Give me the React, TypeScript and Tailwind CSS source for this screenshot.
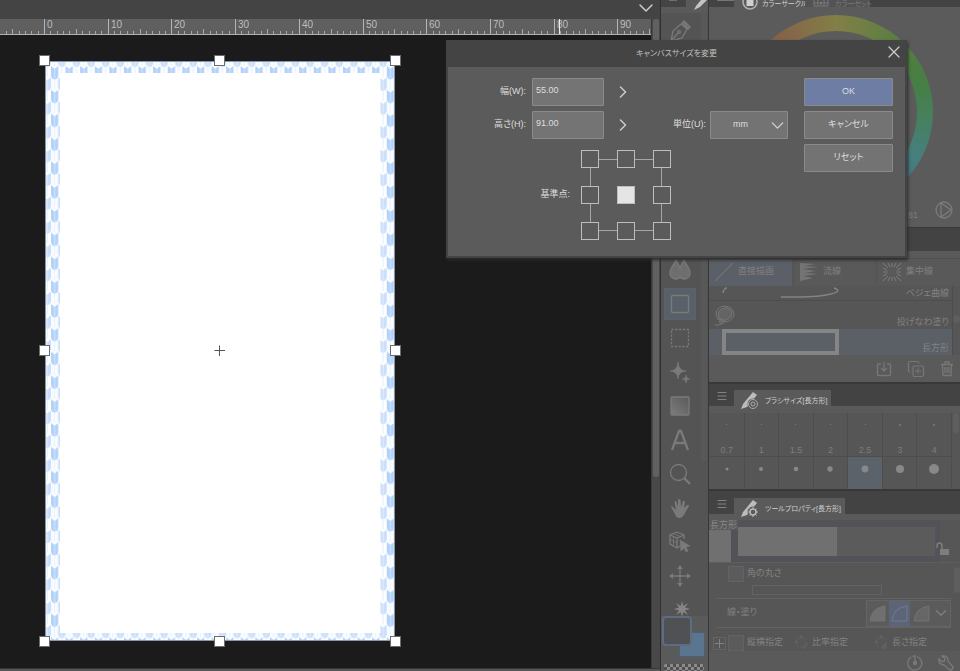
import type { ReactNode } from "react";
import { ChevronDown, ChevronRight, Copy, Menu, X } from "lucide-react";

const RULER_STEP = 6.37;
const RULER_ORIGIN = 45;

const Ruler = () => {
  const ticks = Array.from({ length: 103 }, (_, i) => i - 7);

  return (
    <svg className="block h-4 w-full bg-[#5f5f5f]" aria-hidden="true">
      {ticks.map((n) => {
        const x = Math.round(RULER_ORIGIN + n * RULER_STEP) - 0.5;
        const top = n % 10 === 0 ? 0 : n % 5 === 0 ? 10 : 12;
        return <line key={n} x1={x} x2={x} y1={top} y2={16} stroke={n % 10 === 0 ? "#b5b5b5" : "#a8a8a8"} />;
      })}
      {Array.from({ length: 10 }, (_, i) => (
        <text
          key={i}
          x={Math.round(RULER_ORIGIN + i * 10 * RULER_STEP) + 2}
          y={9}
          fill="#bdbdbd"
          className="text-[10px]"
        >
          {i * 10}
        </text>
      ))}
      <line x1={559.5} x2={559.5} y1={0} y2={16} stroke="#ececec" />
      <rect x={0} y={15} width="100%" height={1} fill="#b0b0b0" />
    </svg>
  );
};

const Feather = ({ x, y, fill }: { x: number; y: number; fill: string }) => (
  <g transform={`translate(${x} ${y})`}>
    <path d="M0 0 L3.2 2.6 V13.4 L1.2 12.6 L0 10Z M7.3 0 L4.1 2.6 V13.4 L6.1 12.6 L7.3 10Z" fill={fill} />
    <path d="M3.2 2.6 H4.1 V13.4 H3.2Z" fill={fill} opacity="0.8" />
  </g>
);

const Paper = () => (
  <svg className="block h-full w-full" viewBox="0 0 350 580" aria-hidden="true">
    <defs>
      <pattern id="yagasuri" x="5.95" y="5" width="14.6" height="23.8" patternUnits="userSpaceOnUse">
        <rect width="14.6" height="23.8" fill="#fdfeff" />
        <path d="M3.6 13 V23.8 M10.9 0 V11" stroke="#dceafc" strokeWidth="0.8" />
        <path d="M1 14 V23.8 M6.3 14 V23.8" stroke="#eef5fe" strokeWidth="0.8" />
        <Feather x={0} y={0} fill="#b2d2f9" />
        <Feather x={7.3} y={11.4} fill="#cbdffa" />
        <Feather x={7.3} y={-12.4} fill="#cbdffa" />
      </pattern>
    </defs>
    <rect width="350" height="580" fill="#fff" />
    <path fillRule="evenodd" d="M0 0H350V580H0Z M15 12V572H335.500V12Z" fill="url(#yagasuri)" />
    <rect x="0.5" y="0.5" width="349" height="579" fill="none" stroke="#8b95a3" strokeWidth="1" />
    <path d="M169.500 289.500H180M174.500 284.500V295" stroke="#555" />
  </svg>
);

const handles = [
  "-left-1.5 -top-1.5",
  "left-[169px] -top-1.5",
  "-right-1.5 -top-1.5",
  "-left-1.5 top-[284px]",
  "-right-1.5 top-[284px]",
  "-left-1.5 -bottom-1.5",
  "left-[169px] -bottom-1.5",
  "-right-1.5 -bottom-1.5",
];

const Workspace = () => (
  <main className="flex min-w-0 flex-1 flex-col">
    <div className="flex h-[19px] items-center justify-end bg-[#444444] pr-0.5">
      <button type="button" aria-label="タブ一覧" className="-mt-1 text-[#cccccc]">
        <ChevronDown size={24} strokeWidth={1.5} />
      </button>
    </div>
    <div className="flex min-h-0 flex-1">
      <div className="flex min-w-0 flex-1 flex-col">
        <Ruler />
        <div className="flex-1 overflow-hidden bg-[#1b1b1b] pl-[45px] pt-[26px]">
          <div className="relative h-[580px] w-[350px]">
            <Paper />
            {handles.map((pos) => (
              <span key={pos} className={`absolute size-[11px] border border-[#6d6d6d] bg-white ${pos}`} />
            ))}
          </div>
        </div>
      </div>
      <div className="w-[9px] border-l border-[#3a3a3a] bg-[#484848] px-px">
        <div className="h-[458px] rounded bg-[#616161]" />
      </div>
    </div>
    <div className="h-[3px] border-t border-[#383838] bg-[#565656]" />
  </main>
);

const Tool = ({ label, active, children }: { label: string; active?: boolean; children: ReactNode }) => (
  <button
    type="button"
    aria-label={label}
    className={`flex size-8 shrink-0 items-center justify-center ${active ? "border border-[#58616c] bg-[#5a6069]" : ""}`}
  >
    <svg width="22" height="22" viewBox="0 0 22 22" fill="none" stroke="#7a7a7a" strokeWidth="1.3">
      {children}
    </svg>
  </button>
);

const ToolBar = () => (
  <aside className="flex w-12 shrink-0 flex-col overflow-hidden border-l border-[#303030] bg-[#545454]">
    <div className="flex h-[13px] shrink-0 bg-[#5a5a5a]">
      <div className="h-[7px] w-[25px] bg-[#444444] pl-2">
        <div className="h-px w-2 bg-[#707070]" />
      </div>
      <svg className="ml-1.5" width="16" height="13" viewBox="0 0 16 13" aria-hidden="true">
        <path d="M4 6 L9 0 H15 L8 7 L2 10Z" fill="#c4c4c4" />
      </svg>
    </div>
    <div className="flex min-h-0 flex-1">
      <div className="flex w-[38px] flex-col items-center gap-0.5 pt-0.5">
        <div className="mb-[205px]">
          <Tool label="ペン">
            <path d="M2 21 L4 11 L12 4 L18 9 L13 18 Z M2 21 L9 13" />
            <circle cx="10" cy="12" r="1.3" />
            <path d="M13 3 L15 1 L21 7 L19 9Z" fill="#727272" />
          </Tool>
        </div>
        <Tool label="色混ぜ">
          <path
            d="M7 1 C5 6 1 9 1 14 C1 18 4 20 7 20 C9 20 10 19 11 18 C12 19 13 20 15 20 C18 20 21 18 21 14 C21 9 17 6 15 1 C14 4 12 6 11 9 C10 6 8 4 7 1Z"
            fill="#6e6e6e"
          />
        </Tool>
        <Tool label="図形" active>
          <rect x="2.500" y="2.500" width="17" height="17" rx="1" />
        </Tool>
        <Tool label="選択範囲">
          <rect x="2.500" y="2.500" width="17" height="17" strokeDasharray="2.2 1.6" />
        </Tool>
        <Tool label="自動選択">
          <path
            d="M9 1 Q9.500 9.500 17 10 Q9.500 10.500 9 18 Q8.500 10.500 1 10 Q8.500 9.500 9 1Z M17 14 Q17 18 21 18 Q17 18 17 22 Q17 18 13 18 Q17 18 17 14Z"
            fill="#7a7a7a"
            strokeWidth="0.6"
          />
        </Tool>
        <Tool label="グラデーション">
          <defs>
            <linearGradient id="grad" x1="0" y1="1" x2="1" y2="0">
              <stop offset="0" stopColor="#7c7c7c" />
              <stop offset="1" stopColor="#5a5a5a" />
            </linearGradient>
          </defs>
          <rect x="2" y="2" width="18" height="18" rx="1" fill="url(#grad)" />
        </Tool>
        <Tool label="テキスト">
          <path d="M3 21 L10 2 H12 L19 21 M6 14 H16" strokeWidth="2.3" />
        </Tool>
        <Tool label="虫めがね">
          <circle cx="9.500" cy="9.500" r="8" />
          <path d="M15 15 L21 21" strokeWidth="2.4" />
        </Tool>
        <Tool label="手のひら">
          <path
            d="M2 10 Q3 8 5 11 L7 13 L5.500 5 Q6 3 7.500 5 L9 10 L9 3 Q10 1 11.500 3 L12 10 L14 4 Q15.500 3 16 5 L15 11 L18 8 Q20 7 20 9 L16 16 Q14 21 10 21 Q7 21 6 17Z"
            fill="#7a7a7a"
            stroke="none"
          />
        </Tool>
        <Tool label="操作">
          <path d="M8 1 L15 4 V8 M8 1 L1 4 V13 L8 17 L11 15 M1 4 L8 7 L15 4 M8 7 V17" />
          <path d="M4.500 5.500 V15 M1 8.500 L8 12 M4.500 2.500 L11.500 5.500" strokeWidth="0.8" />
          <path d="M11 9 L21 15 L17 16 L19 20 L17 21 L15 17 L12 20Z" fill="#7a7a7a" strokeWidth="0.6" />
        </Tool>
        <Tool label="レイヤー移動">
          <path d="M11 3 V19 M3 11 H19" />
          <path
            d="M11 0 L14 4 H8Z M11 22 L8 18 H14Z M0 11 L4 8 V14Z M22 11 L18 14 V8Z"
            fill="#7a7a7a"
            stroke="none"
          />
        </Tool>
        <div className="shrink-0 pl-1 pt-1.5">
          <svg width="18" height="18" viewBox="0 0 18 18" aria-hidden="true">
            <path
              d="M9 1 L10.300 6 L15 3 L12 7.500 L17 9 L12 10.500 L15 15 L10.300 12 L9 17 L7.700 12 L3 15 L6 10.500 L1 9 L6 7.500 L3 3 L7.700 6Z"
              fill="#858585"
            />
          </svg>
        </div>
      </div>
      <div className="ml-0.5 h-[448px] w-1.5 bg-[#585858]" />
    </div>
    <div className="relative h-[55px] shrink-0 bg-[#5a5a5a]">
      <button
        type="button"
        aria-label="サブカラー"
        className="absolute left-[17px] top-[15px] h-[27px] w-[28px] border-2 border-[#545e69] bg-[#597590]"
      />
      <button
        type="button"
        aria-label="メインカラー"
        className="absolute left-px top-0 size-[30px] rounded-sm border-2 border-[#5f6b80] bg-[#505155]"
      />
      <svg className="absolute bottom-0 left-[3px] h-[7px] w-10" aria-hidden="true">
        <defs>
          <pattern id="checker" width="6" height="6" patternUnits="userSpaceOnUse">
            <rect width="6" height="6" fill="#505050" />
            <path d="M0 0H3V3H0Z M3 3H6V6H3Z" fill="#8b8b8b" />
          </pattern>
        </defs>
        <rect width="40" height="7" rx="2" fill="url(#checker)" />
      </svg>
    </div>
  </aside>
);

const PanelTab = ({ title, icon }: { title: string; icon: ReactNode }) => (
  <header className="relative flex h-4 items-start bg-[#434343] pl-[7px]">
    <button type="button" aria-label="メニュー" className="w-[18px] text-[#828282]">
      <Menu size={12} strokeWidth={2} />
    </button>
    <h2 className="flex h-4 items-start gap-1.5 bg-[#5a5a5a] pl-[7px] pr-1 text-[7px] text-[#d0d0d0]">
      <svg className="mt-0.5 shrink-0" width="18" height="18" viewBox="0 0 18 18" aria-hidden="true">
        <path d="M2 12 L12 0 L16 3 L6 15 L0 17Z" fill="#bcbcbc" />
        <circle cx="12" cy="12" r="5.500" fill="#5a5a5a" />
        {icon}
      </svg>
      <span className="mt-[5px] whitespace-nowrap leading-3">{title}</span>
    </h2>
  </header>
);

const ColorPanel = () => (
  <section className="h-[227px] shrink-0 bg-[#5b5b5b]">
    <header className="flex h-[7px] bg-[#434343] pl-2 text-[7px] leading-[7px]">
      <div className="h-px w-[17px] bg-[#777777]" />
      <h2 className="flex w-[70px] items-start gap-1 bg-[#5b5b5b] pl-2 text-[#d0d0d0]">
        <svg className="-mt-1.5 shrink-0" width="16" height="16" viewBox="0 0 16 16" aria-hidden="true">
          <circle cx="8" cy="8" r="7" fill="none" stroke="#b0b0b0" strokeWidth="1.5" />
          <rect x="4.500" y="5" width="7" height="7" fill="#cfcfcf" />
        </svg>
        <span className="whitespace-nowrap">カラーサークル</span>
      </h2>
      <button type="button" className="ml-px flex w-[65px] items-start gap-1.5 bg-[#535353] pl-2 text-[#7c7c7c]">
        <svg className="shrink-0" width="16" height="7" viewBox="0 0 16 7" aria-hidden="true">
          <path d="M1 0V6H15V0M5 0V6M11 0V6M1 3H5M11 3H15" stroke="#7c7c7c" fill="none" />
          <circle cx="8" cy="3" r="1.500" fill="#7c7c7c" />
        </svg>
        <span className="whitespace-nowrap">カラーセット</span>
      </button>
    </header>
    <div className="flex pl-[30px] pt-2">
      <div className="size-[194px] shrink-0 rounded-full bg-[conic-gradient(#827f47,#557e44_45deg,#467e43_70deg,#478059_90deg,#467f7f_120deg,#464f7f_180deg,#7f4680_240deg,#80464a_300deg,#85604a_320deg,#827f47)] p-4">
        <div className="size-full rounded-full bg-[#5b5b5b]" />
      </div>
    </div>
    <div className="-mt-2 flex items-start justify-end gap-[17px] pr-[7px] text-[9px] text-[#7b7b7b]">
      <span className="pt-2">81</span>
      <button type="button" aria-label="切り替え">
        <svg width="18" height="18" viewBox="0 0 18 18" fill="none" stroke="currentColor" strokeWidth="1.300">
          <circle cx="9" cy="9" r="8" />
          <path d="M6 2V16L16 9Z" />
        </svg>
      </button>
    </div>
  </section>
);

const SubToolPanel = () => (
  <section className="shrink-0 bg-[#565656]">
    <div className="h-6 border-t border-[#383838] bg-[#434343]" />
    <div className="h-2 border-b border-[#505050] bg-[#5a5a5a]" />
    <div className="flex h-[27px] gap-[3px] text-[9px] text-[#808080]">
      <button type="button" className="flex w-[83px] items-center gap-1 bg-[#5b5f67] pb-0.5 pl-[5px]">
        <svg width="20" height="20" viewBox="0 0 20 20" aria-hidden="true">
          <path d="M1 19 L19 1" stroke="#7b7b7b" />
        </svg>
        直接描画
      </button>
      <button type="button" className="flex w-20 items-center gap-1 bg-[#595959] pb-0.5 pl-1">
        <svg width="20" height="20" viewBox="0 0 20 20" aria-hidden="true">
          <path d="M1 1 L16 2 L5 4 L19 5 L4 7 L17 9 L6 11 L19 12 L4 14 L14 16 L1 19Z" fill="#747474" />
        </svg>
        流線
      </button>
      <button type="button" className="flex flex-1 items-center gap-1 bg-[#595959] pb-0.5 pl-1">
        <svg width="20" height="20" viewBox="0 0 20 20" stroke="#7b7b7b" aria-hidden="true">
          <path d="M10 1V5M10 15V19M1 10H6M14 10H19M1 1L6 6M19 1L14 6M1 19L6 14M19 19L14 14M6 1L8 5M14 1L12 5M1 6L5 8M19 6L15 8M1 14L5 12M19 14L15 12M6 19L8 15M14 19L12 15" />
        </svg>
        集中線
      </button>
    </div>
    <div className="flex h-[69px]">
      <ul className="flex-1 text-[9px] leading-[14px] text-[#828282]">
        <li className="flex h-[15px] items-center justify-between border-b border-[#4d4d4d] pr-[3px]">
          <svg width="140" height="14" viewBox="0 0 140 14" fill="none" stroke="#838383" aria-hidden="true">
            <path d="M14 7 Q15 2 18 2" strokeWidth="1.500" />
            <path d="M72 11 H90 Q110 11 122 8 C130 6 131 4 125 2" strokeWidth="1.500" />
          </svg>
          ベジェ曲線
        </li>
        <li className="flex h-7 items-end justify-between pl-[5px] pr-[3px]">
          <svg width="22" height="24" viewBox="0 0 22 24" fill="none" stroke="#777" aria-hidden="true">
            <ellipse cx="11" cy="9" rx="9" ry="8" />
            <ellipse cx="11" cy="9" rx="7" ry="6" fill="#646464" transform="rotate(-20 11 9)" />
            <path d="M3 14 Q8 13 10 16 Q9 20 6 18 Q4 16 9 14 M9 18 Q5 21 1 20" />
          </svg>
          投げなわ塗り
        </li>
        <li className="flex h-[26px] items-end justify-between bg-[#5b6067] pl-[13px] pr-[3px]">
          <div className="h-[26px] w-[117px] border-4 border-[#858585]" />
          長方形
        </li>
      </ul>
      <div className="w-2 border-l border-[#4d4d4d] pt-[29px]">
        <div className="h-2 rounded bg-[#5e5e5e]" />
      </div>
    </div>
    <div className="flex h-[27px] items-center justify-end gap-[15px] bg-[#5a5a5a] pr-1.5 text-[#777777]">
      <button type="button" aria-label="追加">
        <svg width="16" height="16" viewBox="0 0 16 16" fill="none" stroke="currentColor" strokeWidth="1.300">
          <path d="M5 3H2.500Q1.500 3 1.500 4V13.500Q1.500 14.500 2.500 14.500H13.500Q14.500 14.500 14.500 13.500V4Q14.500 3 13.500 3H11M8 1V10M5 7L8 10L11 7" />
        </svg>
      </button>
      <button type="button" aria-label="複製" className="relative">
        <Copy size={18} strokeWidth={1.6} />
        <svg className="absolute left-[7px] top-[7px]" width="8" height="8" viewBox="0 0 8 8" stroke="currentColor">
          <path d="M4 1V7M1 4H7" />
        </svg>
      </button>
      <button type="button" aria-label="削除">
        <svg width="14" height="16" viewBox="0 0 14 16" fill="none" stroke="currentColor" strokeWidth="1.300">
          <path d="M1 3.500H13M5 3V1H9V3M2.500 4L3 14.500H11L11.500 4M5 6V12M7 6V12M9 6V12" />
        </svg>
      </button>
    </div>
  </section>
);

const sizes = ["0.7", "1", "1.5", "2", "2.5", "3", "4"];
const dots = [1.5, 2, 2.3, 2.7, 3.4, 4, 5];

const BrushSizePanel = () => (
  <section className="shrink-0 border-t-2 border-[#383838] bg-[#565656]">
    <div className="h-1.5 bg-[#434343]" />
    <PanelTab
      title="ブラシサイズ[長方形]"
      icon={
        <g fill="none" stroke="#aaa">
          <circle cx="12" cy="12" r="4.500" />
          <circle cx="12" cy="12" r="2" />
        </g>
      }
    />
    <div className="h-[7px] bg-[#5a5a5a]" />
    <div className="flex h-[76px]">
      <div className="grid flex-1 grid-cols-7 pl-px">
        {sizes.map((size, i) => (
          <button
            key={size}
            type="button"
            className="flex flex-col border-r border-[#4d4d4d] text-[9px] text-[#7d7d7d]"
          >
            <span className="flex h-[44px] w-full flex-col items-center justify-between border-b border-[#4d4d4d] pt-[11px]">
              <span className={i > 4 ? "size-0.5 rounded-full bg-[#7b7b7b]" : "size-px bg-[#7b7b7b]"} />
              <span className="leading-[11px]">{size}</span>
            </span>
            <span className={`flex w-full flex-1 justify-center pt-[5px] ${i === 4 ? "bg-[#5c6269]" : ""}`}>
              <svg width="14" height="14" viewBox="0 0 14 14" aria-hidden="true">
                <circle cx="7" cy="7" r={dots[i]} fill="#888" />
              </svg>
            </span>
          </button>
        ))}
      </div>
      <div className="w-2 px-px">
        <div className="h-5 rounded bg-[#5e5e5e]" />
      </div>
    </div>
  </section>
);

const ToolPropertyPanel = () => (
  <section className="flex min-h-0 flex-1 flex-col overflow-hidden border-t-2 border-[#383838] bg-[#565656]">
    <div className="h-[7px] shrink-0 bg-[#434343]" />
    <PanelTab
      title="ツールプロパティ[長方形]"
      icon={
        <g fill="none" stroke="#b8b8b8">
          <circle cx="12" cy="12" r="3" strokeWidth="1.500" />
          <path d="M12 7V9M12 15V17M7 12H9M15 12H17M8.500 8.500L10 10M14 14L15.500 15.500M15.500 8.500L14 10M10 14L8.500 15.500" />
        </g>
      }
    />
    <div className="h-1.5 shrink-0 bg-[#5a5a5a]" />
    <div className="flex h-[43px] shrink-0 border-b border-[#5d5d5d]">
      <div className="relative w-[22px] bg-[#707070]">
        <span className="block w-[29px] whitespace-nowrap bg-[#5b5b5b] pl-px text-[9px] leading-[10px] text-[#888888]">
          長方形
        </span>
      </div>
      <div className="flex flex-1 border-b-[6px] border-l-[7px] border-r-[5px] border-t-[7px] border-[#525359]">
        <div className="w-1/2 bg-[#707070]" />
        <div className="w-1/2 bg-[#5b5b5b]" />
      </div>
      <div className="w-5 pt-[22px]">
        <svg className="-ml-1" width="14" height="15" viewBox="0 0 14 15" aria-label="ロック解除">
          <path d="M1 6V4Q1 1 3.500 1Q6 1 6 4V8" fill="none" stroke="#7e7e7e" strokeWidth="1.500" />
          <rect x="4" y="7" width="9" height="6" fill="#7e7e7e" />
        </svg>
      </div>
    </div>
    <div className="flex min-h-0 flex-1 text-[9px] text-[#828282]">
      <div className="flex-1 pl-2">
        <label className="flex h-[22px] items-center gap-[3px] pl-[11px]">
          <input type="checkbox" className="size-4 appearance-none border border-[#636363] bg-[#5b5b5b]" />
          角の丸さ
        </label>
        <div className="ml-[35px] h-2.5 w-[130px] border border-[#626262]" />
        <div className="mt-[3px] flex h-[30px] items-center justify-between border-y border-[#626262] pl-2.5">
          <span>線・塗り</span>
          <div className="flex h-[27px] w-[85px] shrink-0 border border-[#656565] bg-[#5b5b5b]">
            {["塗り", "線", "線と塗り"].map((name, i) => (
              <button
                key={name}
                type="button"
                aria-label={name}
                className={`flex w-[23px] items-center justify-center ${i === 1 ? "bg-[#5c6479]" : ""}`}
              >
                <svg width="17" height="17" viewBox="0 0 17 17">
                  <path
                    d="M1 16 Q2 3 16 1 V16Z"
                    fill={i === 1 ? "none" : i === 0 ? "#707070" : "#666666"}
                    stroke={i === 1 ? "#757b8a" : "#727272"}
                  />
                </svg>
              </button>
            ))}
            <button type="button" aria-label="その他" className="flex flex-1 items-center justify-center">
              <ChevronDown className="shrink-0" size={18} strokeWidth={1.5} />
            </button>
          </div>
        </div>
        <div className="-ml-1 mt-[7px] flex h-4 items-center">
          <button type="button" aria-label="展開" className="size-[13px] border border-[#656565]">
            <svg width="11" height="11" viewBox="0 0 11 11" stroke="#828282">
              <path d="M5.500 1V10M1 5.500H10" />
            </svg>
          </button>
          <label className="ml-0.5 flex w-[66px] items-center gap-[3px]">
            <input type="checkbox" className="size-4 appearance-none border border-[#636363] bg-[#5b5b5b]" />
            縦横指定
          </label>
          <label className="flex w-20 items-center gap-0.5">
            <svg width="16" height="16" viewBox="0 0 16 16" fill="none" stroke="#646464" aria-hidden="true">
              <circle cx="7" cy="7" r="5" strokeDasharray="8 2" />
              <path d="M7 0V4M0 7H4M9 14L14 9" />
            </svg>
            比率指定
          </label>
          <label className="flex items-center gap-0.5">
            <svg width="16" height="16" viewBox="0 0 16 16" fill="none" stroke="#646464" aria-hidden="true">
              <circle cx="7" cy="7" r="5" strokeDasharray="8 2" />
              <path d="M7 0V4M0 7H4M9 15V10H12V13H9" />
            </svg>
            長さ指定
          </label>
        </div>
      </div>
      <div className="w-[9px] pl-[3px] pt-1">
        <div className="h-[26px] rounded bg-[#5e5e5e]" />
      </div>
    </div>
    <div className="flex h-5 shrink-0 items-start justify-end gap-[15px] bg-[#5a5a5a] pr-1.5 pt-1 text-[#7a7a7a]">
      <button type="button" aria-label="初期設定">
        <svg width="16" height="16" viewBox="0 0 16 16" fill="none" stroke="currentColor" strokeWidth="1.300">
          <path d="M10 1.500A7 7 0 1 1 3 3" />
          <path d="M3 3A7 7 0 0 1 7 1" strokeDasharray="1.500 1.500" />
          <path d="M8 0V7" />
          <circle cx="8" cy="8" r="1.500" fill="currentColor" />
        </svg>
      </button>
      <button type="button" aria-label="詳細">
        <svg width="16" height="16" viewBox="0 0 16 16" fill="none" stroke="currentColor" strokeWidth="1.300">
          <path d="M4 1 L7 3.500 L6.500 6 L4 6.500 L1 4 Q0 9 6 10 L12 15 Q15 15 15 12 L10 6 Q10 0 4 1Z" />
        </svg>
      </button>
    </div>
  </section>
);

const anchors = ["左上", "上", "右上", "左", "中央", "右", "左下", "下", "右下"];

const AnchorPicker = () => (
  <div className="relative size-[90px]">
    <div className="absolute inset-[9px] border border-[#a5a5a5]" />
    <div className="relative grid size-full grid-cols-3 content-between justify-between">
      {anchors.map((name, i) => (
        <input
          key={name}
          type="radio"
          name="anchor"
          aria-label={name}
          defaultChecked={i === 4}
          className={`size-[18px] appearance-none border border-[#bebebe] bg-[#5b5b5b] checked:bg-[#e5e5e5] ${
            i % 3 === 1 ? "justify-self-center" : i % 3 === 2 ? "justify-self-end" : ""
          }`}
        />
      ))}
    </div>
  </div>
);

const DialogButton = ({ primary, children }: { primary?: boolean; children: ReactNode }) => (
  <button
    type="button"
    className={`h-7 w-full rounded-[1px] border border-[#8a8a8a] ${primary ? "bg-[#6d7da3]" : "bg-[#737373]"}`}
  >
    {children}
  </button>
);

const SizeField = ({ id, label, value }: { id: string; label: string; value: string }) => (
  <>
    <label htmlFor={id} className="w-[78px] text-right">
      {label}
    </label>
    <input
      id={id}
      defaultValue={value}
      className="ml-1.5 h-7 w-[72px] rounded-[1px] border border-[#8a8a8a] bg-[#747474] px-[3px] pb-1 outline-none"
    />
    <button type="button" aria-label={`${label} 詳細`} className="ml-[9px] text-[#cccccc]">
      <ChevronRight size={20} strokeWidth={1.8} />
    </button>
  </>
);

const CanvasSizeDialog = () => (
  <form
    role="dialog"
    aria-labelledby="dialog-title"
    className="absolute right-[53px] top-10 w-[461px] border-2 border-t-0 border-[#444444] bg-[#5b5b5b] text-[9px] text-[#dedede] shadow-[1px_2px_3px_#2a2a2a]"
  >
    <div className="relative flex h-[27px] items-center justify-center bg-[#444444]">
      <h1 id="dialog-title" className="text-[8px] text-[#c0c0c0]">
        キャンバスサイズを変更
      </h1>
      <button type="button" aria-label="閉じる" className="absolute right-px top-0.5 text-[#cccccc]">
        <X size={20} strokeWidth={1.5} />
      </button>
    </div>
    <div className="flex justify-between pb-4 pr-3 pt-[11px]">
      <div>
        <div className="flex h-7 items-center">
          <SizeField id="width" label="幅(W):" value="55.00" />
        </div>
        <div className="mt-[5px] flex h-7 items-center">
          <SizeField id="height" label="高さ(H):" value="91.00" />
          <label htmlFor="unit" className="ml-10 w-[33px] whitespace-nowrap">
            単位(U):
          </label>
          <div className="relative ml-1">
            <select
              id="unit"
              className="h-7 w-[78px] appearance-none rounded-[1px] border border-[#8a8a8a] bg-[#737373] pl-[22px] outline-none"
            >
              <option>mm</option>
            </select>
            <ChevronDown
              className="pointer-events-none absolute right-0 top-1 text-[#d0d0d0]"
              size={21}
              strokeWidth={1.6}
            />
          </div>
        </div>
        <fieldset className="mt-[11px] flex items-center gap-[11px]">
          <span className="w-[122px] text-right">基準点:</span>
          <AnchorPicker />
        </fieldset>
      </div>
      <div className="flex w-[89px] flex-col gap-[5px]">
        <DialogButton primary>OK</DialogButton>
        <DialogButton>キャンセル</DialogButton>
        <DialogButton>リセット</DialogButton>
      </div>
    </div>
  </form>
);

const App = () => {
  return (
    <div
      lang="ja"
      className="relative flex h-screen overflow-hidden bg-[#444444] font-['Liberation_Sans','Noto_Sans_CJK_JP',sans-serif] [font-feature-settings:'palt']"
    >
      <Workspace />
      <ToolBar />
      <div className="flex w-[252px] shrink-0 flex-col overflow-hidden border-l border-[#383838]">
        <ColorPanel />
        <SubToolPanel />
        <BrushSizePanel />
        <ToolPropertyPanel />
      </div>
      <CanvasSizeDialog />
    </div>
  );
};

export default App;
